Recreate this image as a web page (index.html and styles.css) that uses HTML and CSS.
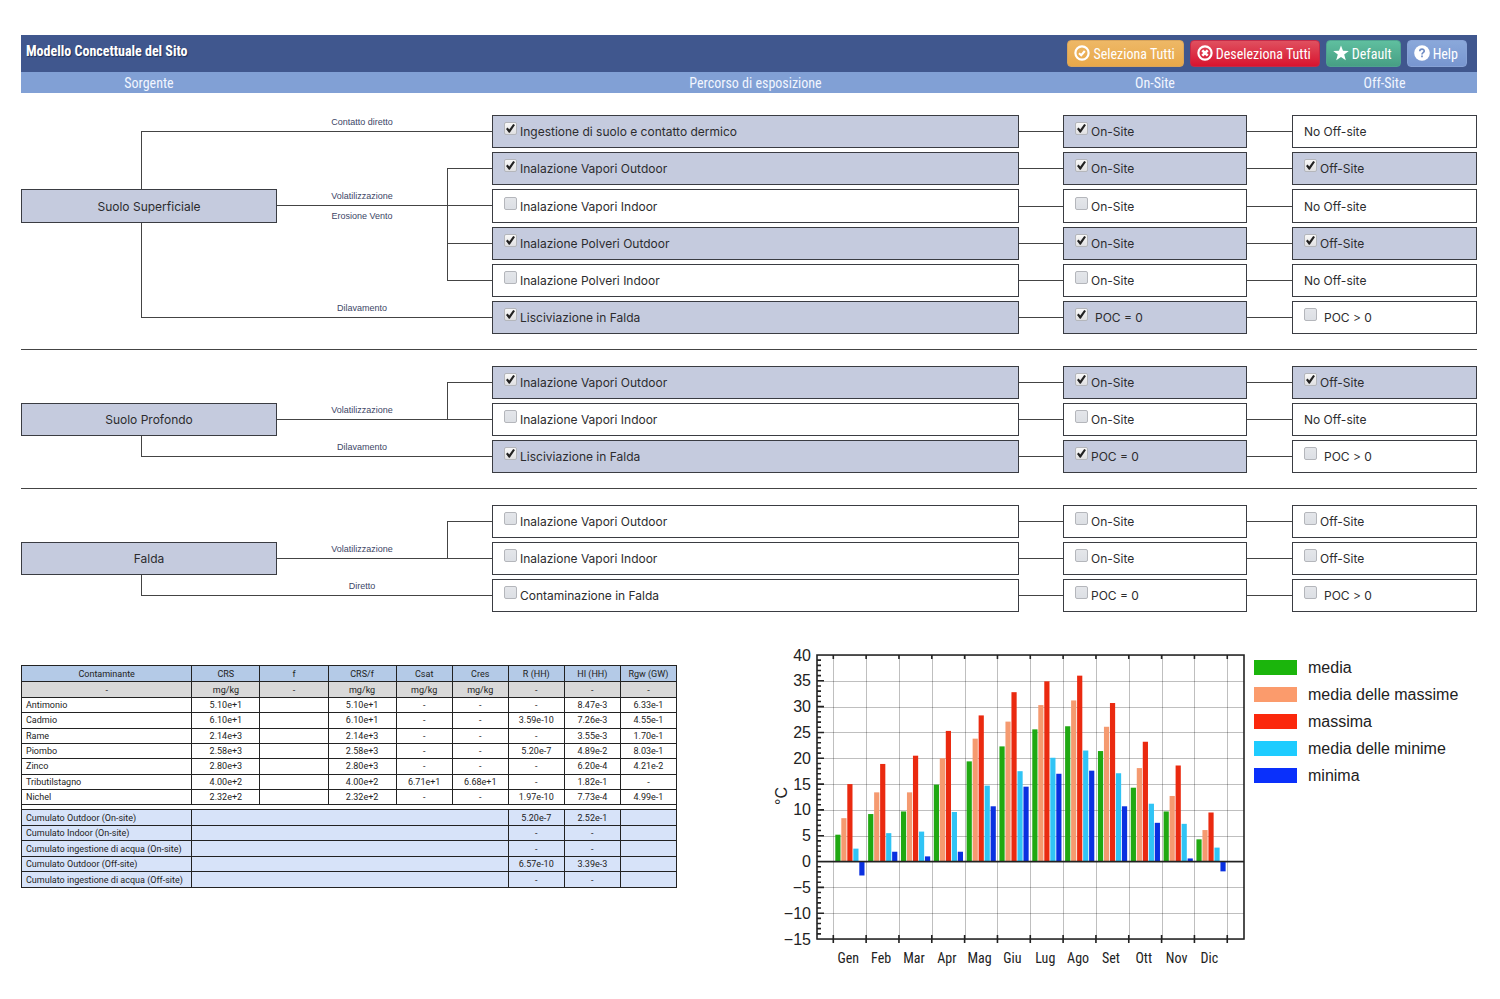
FILE: index.html
```html
<!DOCTYPE html>
<html lang="it">
<head>
<meta charset="utf-8">
<title>Modello Concettuale del Sito</title>
<link rel="stylesheet" href="styles.css">
</head>
<body>
<main class="page">
  <header class="topbar">
    <h1 class="title">Modello Concettuale del Sito</h1>
    <div class="actions">
      <button type="button" class="btn btn-select">
        <svg class="icon" viewBox="0 0 16 16" aria-hidden="true"><circle cx="8" cy="8" r="6.6" fill="none" stroke="currentColor" stroke-width="2.2"/><path d="M5 8.2 7.2 10.2 10.8 6" fill="none" stroke="currentColor" stroke-width="2.2"/></svg>Seleziona Tutti</button>
      <button type="button" class="btn btn-deselect">
        <svg class="icon" viewBox="0 0 16 16" aria-hidden="true"><circle cx="8" cy="8" r="6.6" fill="none" stroke="currentColor" stroke-width="2.2"/><path d="M5.3 5.3 10.7 10.7M10.7 5.3 5.3 10.7" fill="none" stroke="currentColor" stroke-width="2.6"/></svg>Deseleziona Tutti</button>
      <button type="button" class="btn btn-default">
        <svg class="icon" viewBox="0 0 16 16" aria-hidden="true"><path d="M8 .4 10 5.8 15.8 6 11.2 9.6 12.8 15.2 8 12 3.2 15.2 4.8 9.6.2 6 6 5.8Z" fill="currentColor"/></svg>Default</button>
      <button type="button" class="btn btn-help">
        <svg class="icon" viewBox="0 0 16 16" aria-hidden="true"><circle cx="8" cy="8" r="7.8" fill="currentColor"/><path d="M5.8 6.3C5.8 3.4 10.3 3.5 10.2 6.1 10.1 7.7 8 7.6 8 9.4M8 10.6V12.2" fill="none" stroke="#6f8cc4" stroke-width="1.7"/></svg>Help</button>
    </div>
  </header>
  <div class="colheads">
    <span class="head-source">Sorgente</span>
    <div class="row">
      <span>Percorso di esposizione</span><span></span><span>On-Site</span><span></span><span>Off-Site</span>
    </div>
  </div>

  <section class="group group-surface">
    <div class="sources rows-6">
      <div class="wire wire-up"></div>
      <div class="source">Suolo Superficiale</div>
      <div class="wire wire-mid"></div>
      <div class="wire wire-branch"></div>
      <div class="wire wire-tick"></div>
      <div class="wire wire-down"></div>
      <span class="tag tag-first">Contatto diretto</span>
      <span class="tag tag-mid">Volatilizzazione</span>
      <span class="tag tag-below">Erosione Vento</span>
      <span class="tag tag-last">Dilavamento</span>
    </div>
    <div class="paths rows-6">
      <div class="row"><label class="cell on"><input type="checkbox" checked>Ingestione di suolo e contatto dermico</label><i class="link"></i><label class="cell on"><input type="checkbox" checked>On-Site</label><i class="link"></i><div class="cell">No Off-site</div></div>
      <div class="row"><label class="cell on"><input type="checkbox" checked>Inalazione Vapori Outdoor</label><i class="link"></i><label class="cell on"><input type="checkbox" checked>On-Site</label><i class="link"></i><label class="cell on"><input type="checkbox" checked>Off-Site</label></div>
      <div class="row"><label class="cell"><input type="checkbox">Inalazione Vapori Indoor</label><i class="link"></i><label class="cell"><input type="checkbox">On-Site</label><i class="link"></i><div class="cell">No Off-site</div></div>
      <div class="row"><label class="cell on"><input type="checkbox" checked>Inalazione Polveri Outdoor</label><i class="link"></i><label class="cell on"><input type="checkbox" checked>On-Site</label><i class="link"></i><label class="cell on"><input type="checkbox" checked>Off-Site</label></div>
      <div class="row"><label class="cell"><input type="checkbox">Inalazione Polveri Indoor</label><i class="link"></i><label class="cell"><input type="checkbox">On-Site</label><i class="link"></i><div class="cell">No Off-site</div></div>
      <div class="row"><label class="cell on"><input type="checkbox" checked>Lisciviazione in Falda</label><i class="link"></i><label class="cell on spaced"><input type="checkbox" checked>POC = 0</label><i class="link"></i><label class="cell spaced"><input type="checkbox">POC &gt; 0</label></div>
    </div>
  </section>

  <section class="group">
    <div class="sources rows-3">
      <div class="source">Suolo Profondo</div>
      <div class="wire wire-mid"></div>
      <div class="wire wire-branch"></div>
      <div class="wire wire-down"></div>
      <span class="tag tag-mid">Volatilizzazione</span>
      <span class="tag tag-last">Dilavamento</span>
    </div>
    <div class="paths rows-3">
      <div class="row"><label class="cell on"><input type="checkbox" checked>Inalazione Vapori Outdoor</label><i class="link"></i><label class="cell on"><input type="checkbox" checked>On-Site</label><i class="link"></i><label class="cell on"><input type="checkbox" checked>Off-Site</label></div>
      <div class="row"><label class="cell"><input type="checkbox">Inalazione Vapori Indoor</label><i class="link"></i><label class="cell"><input type="checkbox">On-Site</label><i class="link"></i><div class="cell">No Off-site</div></div>
      <div class="row"><label class="cell on"><input type="checkbox" checked>Lisciviazione in Falda</label><i class="link"></i><label class="cell on"><input type="checkbox" checked>POC = 0</label><i class="link"></i><label class="cell spaced"><input type="checkbox">POC &gt; 0</label></div>
    </div>
  </section>

  <section class="group group-water">
    <div class="sources rows-3">
      <div class="source">Falda</div>
      <div class="wire wire-mid"></div>
      <div class="wire wire-branch"></div>
      <div class="wire wire-down"></div>
      <span class="tag tag-mid">Volatilizzazione</span>
      <span class="tag tag-last">Diretto</span>
    </div>
    <div class="paths rows-3">
      <div class="row"><label class="cell"><input type="checkbox">Inalazione Vapori Outdoor</label><i class="link"></i><label class="cell"><input type="checkbox">On-Site</label><i class="link"></i><label class="cell"><input type="checkbox">Off-Site</label></div>
      <div class="row"><label class="cell"><input type="checkbox">Inalazione Vapori Indoor</label><i class="link"></i><label class="cell"><input type="checkbox">On-Site</label><i class="link"></i><label class="cell"><input type="checkbox">Off-Site</label></div>
      <div class="row"><label class="cell"><input type="checkbox">Contaminazione in Falda</label><i class="link"></i><label class="cell"><input type="checkbox">POC = 0</label><i class="link"></i><label class="cell spaced"><input type="checkbox">POC &gt; 0</label></div>
    </div>
  </section>

  <section class="results">
    <table class="risk">
      <colgroup><col class="c-name"><col class="c-wide"><col class="c-wide"><col class="c-wide"><col><col><col><col><col></colgroup>
      <thead>
        <tr><th>Contaminante</th><th>CRS</th><th>f</th><th>CRS/f</th><th>Csat</th><th>Cres</th><th>R (HH)</th><th>HI (HH)</th><th>Rgw (GW)</th></tr>
        <tr class="units"><td>-</td><td>mg/kg</td><td>-</td><td>mg/kg</td><td>mg/kg</td><td>mg/kg</td><td>-</td><td>-</td><td>-</td></tr>
      </thead>
      <tbody>
        <tr><td>Antimonio</td><td>5.10e+1</td><td></td><td>5.10e+1</td><td>-</td><td>-</td><td>-</td><td>8.47e-3</td><td>6.33e-1</td></tr>
        <tr><td>Cadmio</td><td>6.10e+1</td><td></td><td>6.10e+1</td><td>-</td><td>-</td><td>3.59e-10</td><td>7.26e-3</td><td>4.55e-1</td></tr>
        <tr><td>Rame</td><td>2.14e+3</td><td></td><td>2.14e+3</td><td>-</td><td>-</td><td>-</td><td>3.55e-3</td><td>1.70e-1</td></tr>
        <tr><td>Piombo</td><td>2.58e+3</td><td></td><td>2.58e+3</td><td>-</td><td>-</td><td>5.20e-7</td><td>4.89e-2</td><td>8.03e-1</td></tr>
        <tr><td>Zinco</td><td>2.80e+3</td><td></td><td>2.80e+3</td><td>-</td><td>-</td><td>-</td><td>6.20e-4</td><td>4.21e-2</td></tr>
        <tr><td>Tributilstagno</td><td>4.00e+2</td><td></td><td>4.00e+2</td><td>6.71e+1</td><td>6.68e+1</td><td>-</td><td>1.82e-1</td><td>-</td></tr>
        <tr><td>Nichel</td><td>2.32e+2</td><td></td><td>2.32e+2</td><td>-</td><td>-</td><td>1.97e-10</td><td>7.73e-4</td><td>4.99e-1</td></tr>
      </tbody>
      <tbody class="totals">
        <tr class="spacer"><td colspan="9"></td></tr>
        <tr><td>Cumulato Outdoor (On-site)</td><td colspan="5"></td><td>5.20e-7</td><td>2.52e-1</td><td></td></tr>
        <tr><td>Cumulato Indoor (On-site)</td><td colspan="5"></td><td>-</td><td>-</td><td></td></tr>
        <tr><td>Cumulato ingestione di acqua (On-site)</td><td colspan="5"></td><td>-</td><td>-</td><td></td></tr>
        <tr><td>Cumulato Outdoor (Off-site)</td><td colspan="5"></td><td>6.57e-10</td><td>3.39e-3</td><td></td></tr>
        <tr><td>Cumulato ingestione di acqua (Off-site)</td><td colspan="5"></td><td>-</td><td>-</td><td></td></tr>
      </tbody>
    </table>
    <figure class="climate">
      <svg id="chart" class="chart" viewBox="0 0 480 325" role="img" aria-label="Temperature mensili in °C"></svg>
      <ul class="legend">
        <li><span class="swatch media"></span>media</li>
        <li><span class="swatch avgmax"></span>media delle massime</li>
        <li><span class="swatch max"></span>massima</li>
        <li><span class="swatch avgmin"></span>media delle minime</li>
        <li><span class="swatch min"></span>minima</li>
      </ul>
    </figure>
  </section>
</main>
<script src="chart.js"></script>
</body>
</html>
```

FILE: styles.css
```css
* { box-sizing: border-box; }

body {
  margin: 0;
  background: #fff;
  color: #2c2c2e;
  font-family: "Liberation Sans", Arial, sans-serif;
  font-size: 12px;
}

.page { padding: 35px 23px 24px 21px; }

.topbar {
  display: flex;
  justify-content: space-between;
  min-height: 37px;
  padding: 5px 10px 5px 5px;
  background: #40578e;
}

.title {
  margin: 0;
  color: #fff;
  font-family: "Roboto Condensed", Roboto, sans-serif;
  font-size: 14px;
  line-height: 22px;
  text-shadow: 1px 1px 1px #1f2f58;
}

.actions { display: flex; gap: 6px; }

.btn {
  display: flex;
  align-items: center;
  gap: 3px;
  height: 27px;
  padding: 0 8px 0 6px;
  border: 1px solid;
  border-radius: 4px;
  color: #fff;
  font-family: "Roboto Condensed", Roboto, sans-serif;
  font-size: 14px;
}

.icon { width: 16px; height: 16px; margin-bottom: 2px; }
.btn-select { background: linear-gradient(#eeb866, #e8a84a); border-color: #d9a55c; }
.btn-deselect { background: linear-gradient(#e0505f, #d8142f); border-color: #c22a48; }
.btn-default { background: linear-gradient(#5fbf9f, #479f84); border-color: #4fa390; }
.btn-help { background: linear-gradient(#8aa8da, #7896d0); border-color: #87a2d6; }

.colheads {
  display: grid;
  grid-template-columns: 256fr 215fr 985fr;
  padding-top: 1px;
  background: #81a0d5;
  color: #f2f6ff;
  font-family: "Roboto Condensed", Roboto, sans-serif;
  font-size: 14px;
  line-height: 20px;
  text-align: center;
}

.colheads .row { grid-column: 3; }

.row {
  display: grid;
  grid-template-columns: 527fr 44fr 184fr 45fr 185fr;
}

.group {
  display: grid;
  grid-template-columns: 471fr 985fr;
  padding: 16px 0 15px;
  border-bottom: 1px solid #444;
}

.group-surface { padding-top: 22px; }
.group-water { border-bottom: 0; padding-bottom: 0; }

.paths, .sources {
  display: grid;
  row-gap: 4px;
  font-family: Inter, sans-serif;
}

.rows-6 { grid-template-rows: 33px 33px 34px repeat(3, 33px); }
.rows-3 { grid-template-rows: repeat(3, 33px); }

.cell, .source {
  display: flex;
  align-items: center;
  border: 1px solid #3a3c42;
  background: #fff;
}

.cell { padding: 0 11px; }
.on, .source { background: #c5cbde; }

.cell input {
  appearance: none;
  display: grid;
  place-items: center;
  flex: none;
  width: 13px;
  height: 13px;
  margin: 0 3px 6px 0;
  border: 1px solid #b4b6bb;
  border-radius: 2px;
  background: linear-gradient(#e4e6ea, #dcdfe4);
}

.cell input:checked { background: linear-gradient(#f8f8f8, #e0e0e2); }

.cell input:checked::before {
  content: "";
  width: 9px;
  height: 9px;
  background: #222;
  clip-path: polygon(0 55%, 18% 40%, 36% 60%, 80% 0, 100% 12%, 42% 96%, 32% 96%);
}

.spaced input { margin-right: 7px; }
.link { align-self: center; border-top: 1px solid #444; }

.sources { grid-template-columns: 120fr 136fr 170fr 45fr; }
.source { grid-area: 2 / 1 / 3 / 3; justify-content: center; }
.rows-6 .source { grid-row: 3; }

.wire { border: 0 solid #444; }
.wire-up { grid-area: 1 / 2 / 3 / 5; margin: 16px 0 -4px; border-width: 1px 0 0 1px; }
.wire-mid { grid-area: 2 / 3 / 3 / 5; margin-top: 16px; border-top-width: 1px; }
.wire-branch { grid-area: 1 / 4 / 3 / 5; margin: 16px 0; border-width: 1px 0 0 1px; }
.wire-down { grid-area: 3 / 2 / 4 / 5; margin: -4px 0 16px; border-width: 0 0 1px 1px; }
.wire-tick { grid-area: 4 / 4 / 5 / 5; margin-top: 16px; border-top-width: 1px; }
.rows-6 .wire-mid { grid-row: 3 / 4; }
.rows-6 .wire-branch { grid-row: 2 / 6; border-bottom-width: 1px; }
.rows-6 .wire-down { grid-row: 4 / 7; }

.tag {
  grid-column: 3;
  color: #3d4666;
  font-family: "Liberation Sans", Arial, sans-serif;
  font-size: 9px;
  line-height: 14px;
  text-align: center;
}

.tag-first { grid-row: 1; }
.tag-mid { grid-row: 2; }
.rows-6 .tag-mid { grid-row: 3; }
.tag-below { grid-row: 3; align-self: end; }
.tag-last { grid-row: 3; }
.rows-6 .tag-last { grid-row: 6; }

.results {
  display: grid;
  grid-template-columns: 656fr 93fr 707fr;
  align-items: start;
  margin-top: 33px;
}

.risk {
  width: 100%;
  height: 223px;
  margin-top: 20px;
  border-collapse: collapse;
  table-layout: fixed;
  color: #222;
  font-family: Roboto, sans-serif;
  font-size: 9px;
  line-height: 12px;
}

.risk thead tr { height: 16px; }
.c-name { width: 26%; }
.c-wide { width: 10.4%; }

.risk th, .risk td {
  padding: 0;
  border: 1px solid #222;
  font-weight: 400;
  text-align: center;
  white-space: nowrap;
}

.risk th { background: #b4cae7; }
.units td { background: #d9d9d9; }
.risk tbody td:first-child { padding-left: 4px; text-align: left; }
.totals td { background: #d7e3f9; }
.risk .spacer td { height: 5px; background: #fff; line-height: 0; }

.climate {
  grid-column: 3;
  display: flex;
  gap: 4px;
  margin: 0;
}

.chart { flex: none; width: 480px; height: 325px; }
.chart text { fill: #222; font-size: 16px; }
.chart .month { font-family: "Roboto Condensed", Roboto, sans-serif; font-size: 14px; text-anchor: middle; }
.chart .tick { text-anchor: end; }
.chart .unit { text-anchor: middle; }
.grid { stroke: #000; stroke-opacity: .25; stroke-width: 1; }
.axis { fill: none; stroke: #222; stroke-width: 1.6; }

.legend {
  margin: 9px 0 0;
  padding: 0;
  list-style: none;
  color: #222;
  font-size: 16px;
}

.legend li {
  display: flex;
  align-items: center;
  gap: 11px;
  height: 27px;
  white-space: nowrap;
}

.swatch { width: 43px; height: 15px; }
.media { background: #1bb50c; fill: #20a912; }
.avgmax { background: #fb9b6c; fill: #f59a70; }
.max { background: #fb280c; fill: #ea2a10; }
.avgmin { background: #1eccff; fill: #30c4f5; }
.min { background: #0a30fb; fill: #0a30e0; }
```

FILE: chart.js
```js
const data = [
  ["Gen", 5.2, 8.4, 15, 2.5, -2.7],
  ["Feb", 9.2, 13.4, 18.9, 5.5, 1.9],
  ["Mar", 9.7, 13.4, 20.5, 5.8, 1],
  ["Apr", 14.9, 20, 25.3, 9.6, 1.9],
  ["Mag", 19.4, 23.8, 28.3, 14.7, 10.7],
  ["Giu", 22.3, 27.1, 32.8, 17.5, 14.5],
  ["Lug", 25.6, 30.3, 34.9, 20.1, 17],
  ["Ago", 26.2, 31.2, 36, 21.5, 17.6],
  ["Set", 21.4, 26.1, 30.7, 17.1, 10.7],
  ["Ott", 14.3, 18.1, 23.2, 11.2, 7.5],
  ["Nov", 9.7, 12.7, 18.6, 7.3, 0.6],
  ["Dic", 4.3, 6.1, 9.5, 2.7, -1.9]
];
const series = ["media", "avgmax", "max", "avgmin", "min"];
const left = 47, right = 474, top0 = 10, bottom = 294;
const unit = (bottom - top0) / 55;
const step = 32.83, first = 63.3;
const y = v => top0 + (40 - v) * unit;
let out = "";
let axis = `M${left} ${top0}H${right}V${bottom}H${left}ZM${left} ${y(0)}H${right}`;

for (let v = -15; v <= 40; v++) {
  const major = v % 5 === 0;
  axis += `M${left} ${y(v)}h${major ? 7 : 4}`;
  if (major) {
    out += `<path class="grid" d="M${left} ${Math.round(y(v)) + 0.5}H${right}"/>`;
    out += `<text class="tick" x="41" y="${y(v) + 5.5}">${v < 0 ? "−" + -v : v}</text>`;
  }
}
for (let i = 0; i <= 12; i++) {
  const x = first + i * step;
  out += `<path class="grid" d="M${Math.round(x) + 0.5} ${top0}V${bottom}"/>`;
  axis += `M${x} ${top0}v4M${x} ${bottom - 4}v8`;
}
data.forEach(([name, ...values], i) => {
  const x = first + i * step;
  values.forEach((v, k) => {
    out += `<rect class="${series[k]}" x="${x + 2 + k * 6}" y="${y(Math.max(v, 0))}" width="5.2" height="${Math.abs(v) * unit}"/>`;
  });
  out += `<text class="month" x="${x + 15}" y="318">${name}</text>`;
});
out += `<path class="axis" d="${axis}"/>`;
out += `<text class="unit" transform="rotate(-90 17 151)" x="17" y="151">°C</text>`;
document.getElementById("chart").innerHTML = out;
```
